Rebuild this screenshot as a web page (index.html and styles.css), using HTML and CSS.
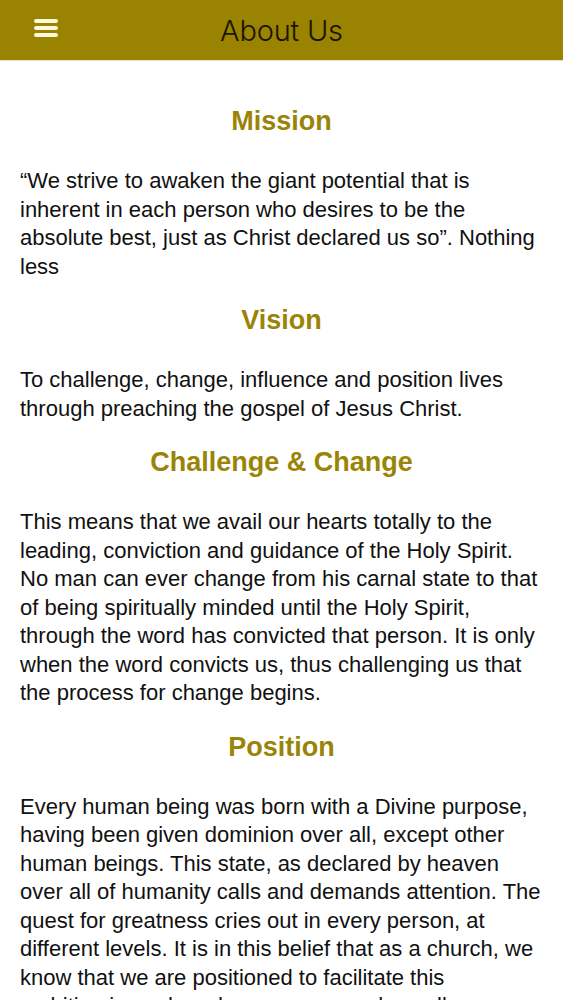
FILE: index.html
```html
<!DOCTYPE html>
<html lang="en">
<head>
  <meta charset="UTF-8" />
  <meta name="viewport" content="width=device-width, initial-scale=1.0" />
  <title>About Us</title>
  <link rel="stylesheet" href="styles.css">
</head>
<body>
  <!-- Top bar -->
  <div class="topbar">
    <button class="menu-btn" aria-label="Menu">
      <svg width="24" height="20" viewBox="0 0 24 20">
        <rect x="0" y="1" width="24" height="4" rx="2" fill="#fff8dc"/>
        <rect x="0" y="8" width="24" height="4" rx="2" fill="#fff8dc"/>
        <rect x="0" y="15" width="24" height="4" rx="2" fill="#fff8dc"/>
      </svg>
    </button>
    <div class="title">About Us</div>
  </div>

  <div class="content">
    <h2>Mission</h2>
    <p>“We strive to awaken the giant potential that is inherent in each person who desires to be the absolute best, just as Christ declared us so”. Nothing less</p>

    <h2>Vision</h2>
    <p>To challenge, change, influence and position lives through preaching the gospel of Jesus Christ.</p>

    <h2>Challenge &amp; Change</h2>
    <p>This means that we avail our hearts totally to the leading, conviction and guidance of the Holy Spirit. No man can ever change from his carnal state to that of being spiritually minded until the Holy Spirit, through the word has convicted that person. It is only when the word convicts us, thus challenging us that the process for change begins.</p>

    <h2>Position</h2>
    <p>Every human being was born with a Divine purpose, having been given dominion over all, except other human beings. This state, as declared by heaven over all of humanity calls and demands attention. The quest for greatness cries out in every person, at different levels. It is in this belief that as a church, we know that we are positioned to facilitate this<br>ambition in each and every person who walks through our doors.</p>
  </div>
</body>
</html>
```

FILE: styles.css
```css
body, html {
  margin: 0;
  padding: 0;
  background: #fff;
  font-family: "Liberation Sans", Arial, sans-serif;
  color: #111;
}
.topbar {
  height: 60px;
  background: #998300;
  border-bottom: 1px solid #e8e2c8;
  display: flex;
  align-items: center;
  position: relative;
  justify-content: center;
}
.menu-btn {
  position: absolute;
  left: 34px;
  top: 18px;
  background: none;
  border: none;
  padding: 0;
  cursor: pointer;
  line-height: 0;
}
.title {
  font-family: Inter, "Liberation Sans", sans-serif;
  font-weight: 300;
  font-size: 29px;
  color: #1a1400;
  letter-spacing: -0.2px;
}
.content {
  padding: 45px 20px 0 20px;
}
h2 {
  margin: 0;
  text-align: center;
  color: #9a8407;
  font-size: 27px;
  font-weight: bold;
  line-height: 30px;
}
p {
  margin: 31px 0 24px 0;
  font-size: 22px;
  line-height: 28.5px;
}
```
